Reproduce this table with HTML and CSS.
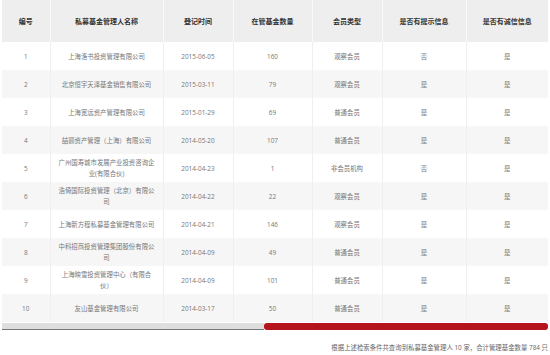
FILE: index.html
```html
<!DOCTYPE html>
<html lang="zh-CN">
<head>
    <meta charset="UTF-8">
    <title>私募基金管理人查询结果</title>
    <link rel="stylesheet" href="styles.css">
</head>
<body>
    <div class="container">
        <table class="result-table">
            <colgroup>
                <col class="col-no">
                <col class="col-name">
                <col class="col-date">
                <col class="col-count">
                <col class="col-type">
                <col class="col-tip">
                <col class="col-credit">
            </colgroup>
            <thead>
                <tr>
                    <th>编号</th>
                    <th>私募基金管理人名称</th>
                    <th>登记时间</th>
                    <th>在管基金数量</th>
                    <th>会员类型</th>
                    <th>是否有提示信息</th>
                    <th>是否有诚信信息</th>
                </tr>
            </thead>
            <tbody>
                <tr>
                    <td>1</td>
                    <td class="name">上海洛书投资管理有限公司</td>
                    <td>2015-06-05</td>
                    <td>160</td>
                    <td>观察会员</td>
                    <td>否</td>
                    <td>是</td>
                </tr>
                <tr>
                    <td>2</td>
                    <td class="name">北京恒宇天泽基金销售有限公司</td>
                    <td>2015-03-11</td>
                    <td>79</td>
                    <td>观察会员</td>
                    <td>是</td>
                    <td>是</td>
                </tr>
                <tr>
                    <td>3</td>
                    <td class="name">上海宽远资产管理有限公司</td>
                    <td>2015-01-29</td>
                    <td>69</td>
                    <td>普通会员</td>
                    <td>是</td>
                    <td>是</td>
                </tr>
                <tr>
                    <td>4</td>
                    <td class="name">喆颢资产管理（上海）有限公司</td>
                    <td>2014-05-20</td>
                    <td>107</td>
                    <td>普通会员</td>
                    <td>是</td>
                    <td>是</td>
                </tr>
                <tr>
                    <td>5</td>
                    <td class="name">广州国寿城市发展产业投资咨询企业(有限合伙)</td>
                    <td>2014-04-23</td>
                    <td>1</td>
                    <td>非会员机构</td>
                    <td>否</td>
                    <td>是</td>
                </tr>
                <tr>
                    <td>6</td>
                    <td class="name">浩倚国际投资管理（北京）有限公司</td>
                    <td>2014-04-22</td>
                    <td>22</td>
                    <td>观察会员</td>
                    <td>是</td>
                    <td>是</td>
                </tr>
                <tr>
                    <td>7</td>
                    <td class="name">上海新方程私募基金管理有限公司</td>
                    <td>2014-04-21</td>
                    <td>146</td>
                    <td>观察会员</td>
                    <td>是</td>
                    <td>是</td>
                </tr>
                <tr>
                    <td>8</td>
                    <td class="name">中科招商投资管理集团股份有限公司</td>
                    <td>2014-04-09</td>
                    <td>49</td>
                    <td>普通会员</td>
                    <td>是</td>
                    <td>是</td>
                </tr>
                <tr>
                    <td>9</td>
                    <td class="name">上海映雪投资管理中心（有限合伙）</td>
                    <td>2014-04-09</td>
                    <td>101</td>
                    <td>普通会员</td>
                    <td>是</td>
                    <td>是</td>
                </tr>
                <tr>
                    <td>10</td>
                    <td class="name">友山基金管理有限公司</td>
                    <td>2014-03-17</td>
                    <td>50</td>
                    <td>普通会员</td>
                    <td>是</td>
                    <td>是</td>
                </tr>
            </tbody>
        </table>

        <div class="scrollbar">
            <div class="scroll-track"></div>
            <div class="scroll-thumb"></div>
        </div>

        <p class="summary">根据上述检索条件共查询到私募基金管理人 10 家，合计管理基金数量 784 只</p>
    </div>
</body>
</html>
```

FILE: styles.css
```css
* {
    margin: 0;
    padding: 0;
    box-sizing: border-box;
}

body {
    background-color: #fff;
    font-family: "Open Sans", "Noto Sans CJK SC", sans-serif;
    color: #777;
}

.container {
    width: 546px;
    margin: 0 2px;
}

.result-table {
    width: 546px;
    border-collapse: collapse;
    table-layout: fixed;
}

.col-no { width: 48px; }
.col-name { width: 113px; }
.col-date { width: 70px; }
.col-count { width: 79px; }
.col-type { width: 70px; }
.col-tip { width: 84px; }
.col-credit { width: 82px; }

th {
    height: 42px;
    background-color: #eeeeee;
    color: #333;
    font-size: 7px;
    font-weight: 700;
    text-align: center;
    border-right: 1px solid #fafafa;
}

td {
    height: 28px;
    padding: 0 7px;
    font-size: 6.4px;
    line-height: 11px;
    text-align: center;
    border-right: 1px solid #efefef;
}

th:last-child,
td:last-child {
    border-right: none;
}

tbody tr:nth-child(even) td {
    background-color: #f6f6f6;
}

.scrollbar {
    display: flex;
    height: 7px;
    margin-top: 1px;
}

.scroll-track {
    width: 262px;
    background-color: #dedede;
    border-bottom: 1px solid #777;
}

.scroll-thumb {
    flex: 1;
    background-color: #b5141d;
    border-radius: 3px;
}

.summary {
    margin-top: 13px;
    font-size: 6.4px;
    color: #666;
    text-align: right;
}
```
